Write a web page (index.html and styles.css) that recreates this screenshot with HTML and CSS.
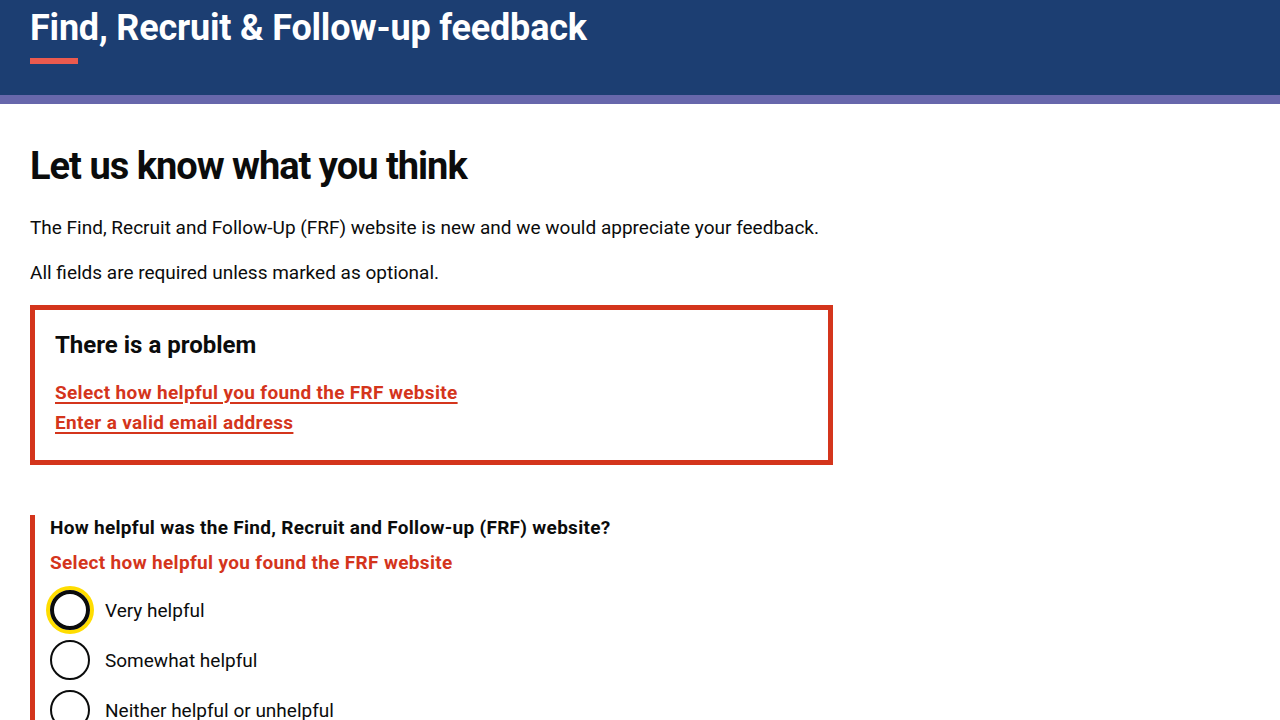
FILE: index.html
```html
<!DOCTYPE html>
<html lang="en">
<head>
<meta charset="utf-8">
<title>Find, Recruit &amp; Follow-up feedback</title>
<link rel="stylesheet" href="styles.css">
</head>
<body>
<header class="masthead">
  <div class="masthead-inner">
    <div class="masthead-title">Find, Recruit &amp; Follow-up feedback</div>
    <span class="masthead-rule"></span>
  </div>
</header>
<div class="stripe"></div>
<main class="main">
  <h1 class="page-title">Let us know what you think</h1>
  <p class="body-text">The Find, Recruit and Follow-Up (FRF) website is new and we would appreciate your feedback.</p>
  <p class="body-text">All fields are required unless marked as optional.</p>

  <div class="error-summary">
    <h2 class="error-summary-title">There is a problem</h2>
    <ul class="error-list">
      <li><a href="#helpful" class="error-link">Select how helpful you found the FRF website</a></li>
      <li><a href="#email" class="error-link">Enter a valid email address</a></li>
    </ul>
  </div>

  <div class="form-group form-group-error" id="helpful">
    <div class="legend">How helpful was the Find, Recruit and Follow-up (FRF) website?</div>
    <div class="error-message">Select how helpful you found the FRF website</div>
    <div class="radios">
      <label class="radio">
        <span class="radio-circle radio-focus"></span>
        <span class="radio-label">Very helpful</span>
      </label>
      <label class="radio">
        <span class="radio-circle"></span>
        <span class="radio-label">Somewhat helpful</span>
      </label>
      <label class="radio">
        <span class="radio-circle"></span>
        <span class="radio-label">Neither helpful or unhelpful</span>
      </label>
      <label class="radio">
        <span class="radio-circle"></span>
        <span class="radio-label">Somewhat unhelpful</span>
      </label>
    </div>
  </div>
</main>
</body>
</html>
```

FILE: styles.css
```css
html, body {
  margin: 0;
  padding: 0;
  background: #ffffff;
  font-family: Roboto, "Liberation Sans", Arial, sans-serif;
  color: #0b0c0c;
}

.masthead {
  background: #1c3e72;
  height: 95px;
}

.masthead-inner {
  padding: 7px 30px 0;
  display: flex;
  flex-direction: column;
}

.masthead-title {
  color: #ffffff;
  font-weight: 700;
  font-size: 36px;
  line-height: 42px;
  letter-spacing: -0.2px;
}

.masthead-rule {
  display: block;
  width: 48px;
  height: 6px;
  margin-top: 9px;
  background: #eb5a4e;
}

.stripe {
  height: 9px;
  background: #6767ab;
}

.main {
  padding: 40px 30px 0;
}

.page-title {
  margin: 0 0 27px;
  font-size: 38px;
  line-height: 44px;
  font-weight: 700;
  letter-spacing: -1px;
}

.body-text {
  margin: 0 0 20px;
  font-size: 19px;
  line-height: 25px;
}

.error-summary {
  width: 803px;
  border: 5px solid #d4351c;
  padding: 20px 20px 20px;
  box-sizing: border-box;
  height: 160px;
}

.error-summary-title {
  margin: 0 0 18px;
  font-size: 24px;
  line-height: 30px;
  font-weight: 700;
}

.error-list {
  list-style: none;
  margin: 0;
  padding: 0;
}

.error-list li {
  font-size: 19px;
  line-height: 30px;
  letter-spacing: 0.33px;
}

.error-link {
  color: #d4351c;
  font-weight: 700;
  text-decoration: underline;
  text-decoration-thickness: 2px;
  text-underline-offset: 3px;
}

.form-group {
  margin-top: 50px;
}

.form-group-error {
  border-left: 5px solid #d4351c;
  padding-left: 15px;
}

.legend {
  font-size: 19px;
  font-weight: 700;
  line-height: 25px;
  letter-spacing: 0.3px;
  margin-bottom: 10px;
}

.error-message {
  color: #d4351c;
  font-size: 19px;
  font-weight: 700;
  line-height: 25px;
  letter-spacing: 0.33px;
  margin-bottom: 15px;
}

.radios {
  display: flex;
  flex-direction: column;
  gap: 10px;
}

.radio {
  display: flex;
  align-items: center;
  gap: 15px;
  height: 40px;
}

.radio-circle {
  width: 40px;
  height: 40px;
  box-sizing: border-box;
  border: 2px solid #0b0c0c;
  border-radius: 50%;
  flex: none;
}

.radio-focus {
  border-width: 4px;
  box-shadow: 0 0 0 4px #ffdd00;
}

.radio-label {
  font-size: 19px;
  line-height: 25px;
}
```
